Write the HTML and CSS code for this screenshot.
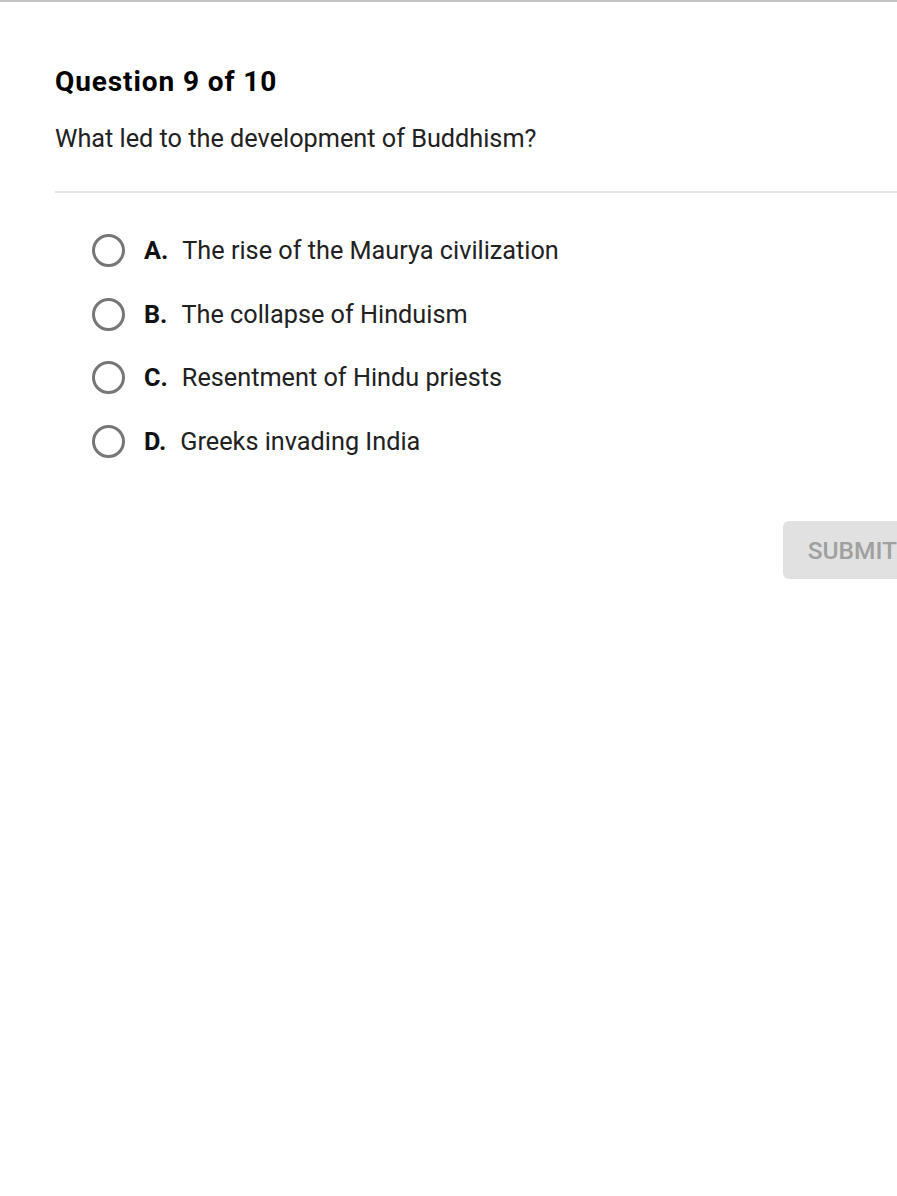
FILE: index.html
```html
<!DOCTYPE html>
<html lang="en">
<head>
    <meta charset="UTF-8">
    <meta name="viewport" content="width=device-width, initial-scale=1.0">
    <title>Question 9 of 10</title>
    <link rel="stylesheet" href="styles.css">
</head>
<body>
    <div class="quiz">
        <h1 class="quiz-title">Question 9 of 10</h1>
        <p class="quiz-question">What led to the development of Buddhism?</p>

        <ul class="answers">
            <li class="answer">
                <span class="radio"></span>
                <span class="answer-letter">A.</span>
                <span class="answer-text">The rise of the Maurya civilization</span>
            </li>
            <li class="answer">
                <span class="radio"></span>
                <span class="answer-letter">B.</span>
                <span class="answer-text">The collapse of Hinduism</span>
            </li>
            <li class="answer">
                <span class="radio"></span>
                <span class="answer-letter">C.</span>
                <span class="answer-text">Resentment of Hindu priests</span>
            </li>
            <li class="answer">
                <span class="radio"></span>
                <span class="answer-letter">D.</span>
                <span class="answer-text">Greeks invading India</span>
            </li>
        </ul>

        <div class="actions">
            <button class="submit" disabled>SUBMIT</button>
        </div>
    </div>
</body>
</html>
```

FILE: styles.css
```css
/* General styles */
html, body {
    margin: 0;
    padding: 0;
    background: #fff;
    overflow: hidden;
}

body {
    font-family: Roboto, Arial, sans-serif;
    color: #212121;
    border-top: 2px solid #c4c4c4;
    height: 1194px;
}

/* Quiz block (runs to the right edge of the screen) */
.quiz {
    width: 842px;
    margin-left: 55px;
}

.quiz-title {
    margin: 0;
    padding-top: 64px;
    font-size: 28px;
    font-weight: 700;
    letter-spacing: 0.9px;
    line-height: 32px;
    color: #000;
}

.quiz-question {
    margin: 0;
    padding: 26px 0 37px;
    font-size: 25.25px;
    line-height: 30px;
    border-bottom: 2px solid #e6e6e6;
}

/* Answer list */
.answers {
    list-style: none;
    margin: 0;
    padding: 26px 0 0 37px;
}

.answer {
    display: flex;
    align-items: center;
    height: 63.5px;
    font-size: 25.25px;
}

.radio {
    width: 27px;
    height: 27px;
    border: 3px solid #767676;
    border-radius: 50%;
    margin-right: 19px;
    flex-shrink: 0;
}

.answer-letter {
    font-weight: 700;
    margin-right: 14px;
    color: #111;
}

/* Submit */
.actions {
    display: flex;
    justify-content: flex-end;
    margin-top: 48px;
}

.submit {
    background: #e1e1e1;
    color: #a0a0a0;
    border: none;
    border-radius: 6px 0 0 6px;
    font-family: Roboto, Arial, sans-serif;
    font-size: 24.5px;
    font-weight: 500;
    height: 58px;
    padding: 0 0 0 25px;
}
```
